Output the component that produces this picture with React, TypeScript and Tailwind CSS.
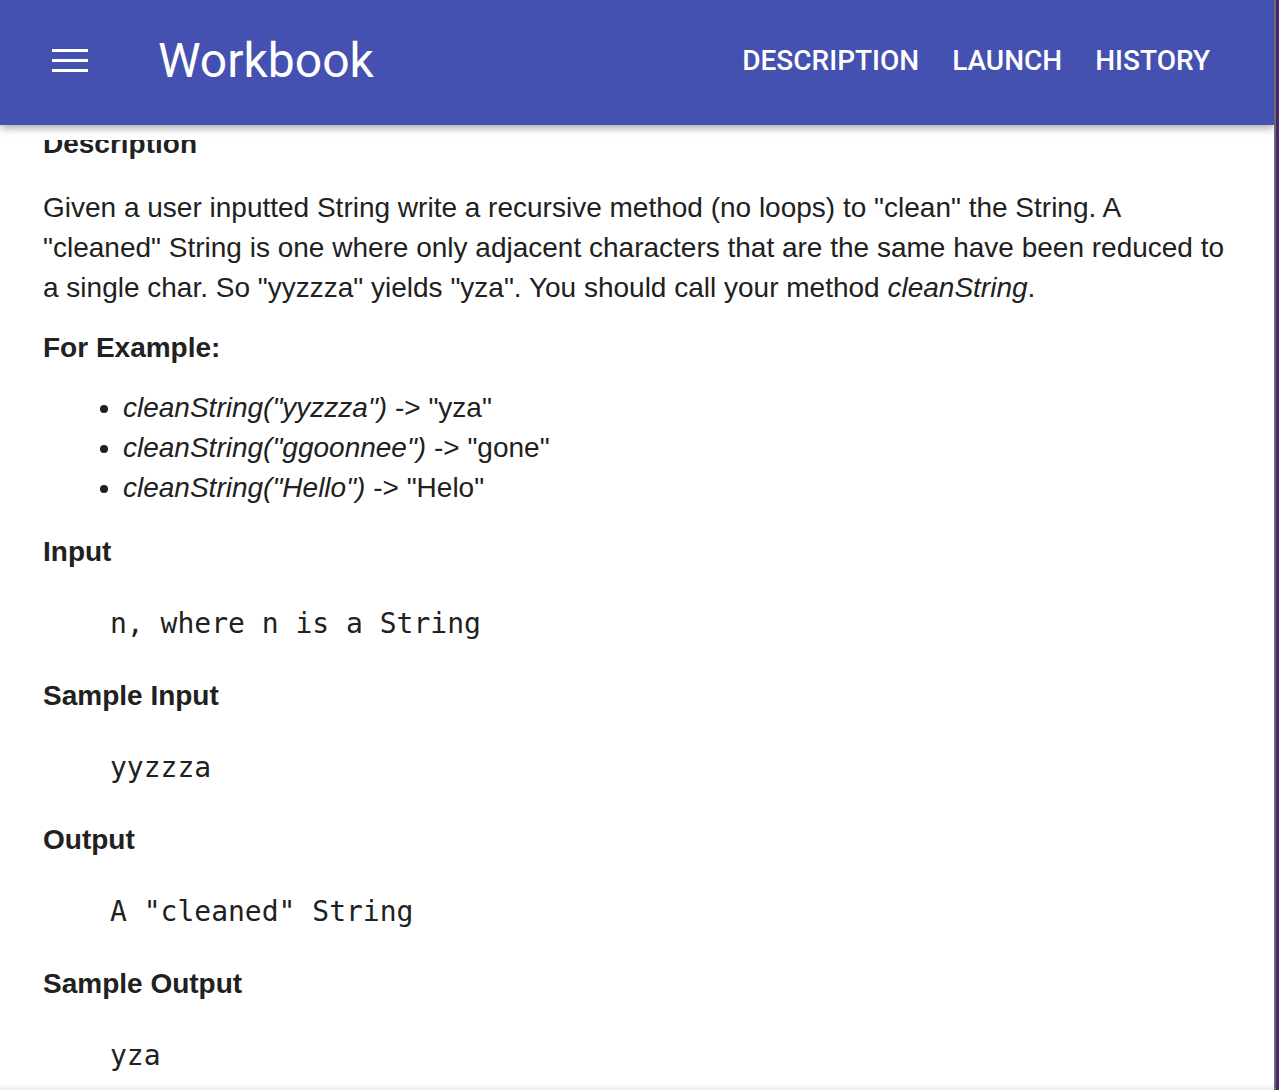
export default function App() {
  const heading = "font-bold text-[28px] leading-[40px]";
  const mono = "pl-[67px] font-['DejaVu_Sans_Mono',monospace] text-[28px] leading-[40px]";
  return (
    <div className="flex h-[1090px] w-full overflow-hidden bg-white">
      <div className="relative flex-1 overflow-hidden">
        <header className="absolute inset-x-0 top-0 z-10 h-[140px] bg-white">
          <div className="flex h-[125px] items-center bg-[#4551b1] pb-[4px] text-white shadow-[0_3px_8px_rgba(0,0,0,0.35)]">
            <div className="ml-[52px] flex w-[36px] flex-col gap-[7px]">
              <span className="block h-[3px] bg-white" />
              <span className="block h-[3px] bg-white" />
              <span className="block h-[3px] bg-white" />
            </div>
            <div className="ml-[70px] font-['Roboto',sans-serif] text-[48px] leading-none">Workbook</div>
            <nav className="ml-auto mr-[64px] flex gap-[33px] font-['Roboto',sans-serif] text-[28px] font-medium leading-none">
              <span>DESCRIPTION</span>
              <span>LAUNCH</span>
              <span>HISTORY</span>
            </nav>
          </div>
        </header>

        <main className="px-[43px] pt-[124px] font-['Liberation_Sans',Arial,sans-serif] text-[28px] leading-[40px] text-[#212121]">
          <h3 className={heading}>Description</h3>
          <p className="mt-[24px]">
            Given a user inputted String write a recursive method (no loops) to "clean" the String. A
            <br />
            "cleaned" String is one where only adjacent characters that are the same have been reduced to
            <br />
            a single char. So "yyzzza" yields "yza". You should call your method <em>cleanString</em>.
          </p>
          <h3 className={`${heading} mt-[20px]`}>For Example:</h3>
          <ul className="mt-[20px] list-disc pl-[80px]">
            <li>
              <em>cleanString("yyzzza")</em> -&gt; "yza"
            </li>
            <li>
              <em>cleanString("ggoonnee")</em> -&gt; "gone"
            </li>
            <li>
              <em>cleanString("Hello")</em> -&gt; "Helo"
            </li>
          </ul>
          <h3 className={`${heading} mt-[24px]`}>Input</h3>
          <pre className={`${mono} mt-[32px]`}>n, where n is a String</pre>
          <h3 className={`${heading} mt-[32px]`}>Sample Input</h3>
          <pre className={`${mono} mt-[32px]`}>yyzzza</pre>
          <h3 className={`${heading} mt-[32px]`}>Output</h3>
          <pre className={`${mono} mt-[32px]`}>A "cleaned" String</pre>
          <h3 className={`${heading} mt-[32px]`}>Sample Output</h3>
          <pre className={`${mono} mt-[32px]`}>yza</pre>
        </main>
        <div className="absolute inset-x-0 bottom-0 h-[6px] bg-gradient-to-b from-transparent to-[#ececec]" />
      </div>
      <div className="w-[2px] bg-[#6b6b6b]" />
      <div className="w-[3px] bg-[#4a2470]" />
    </div>
  );
}
